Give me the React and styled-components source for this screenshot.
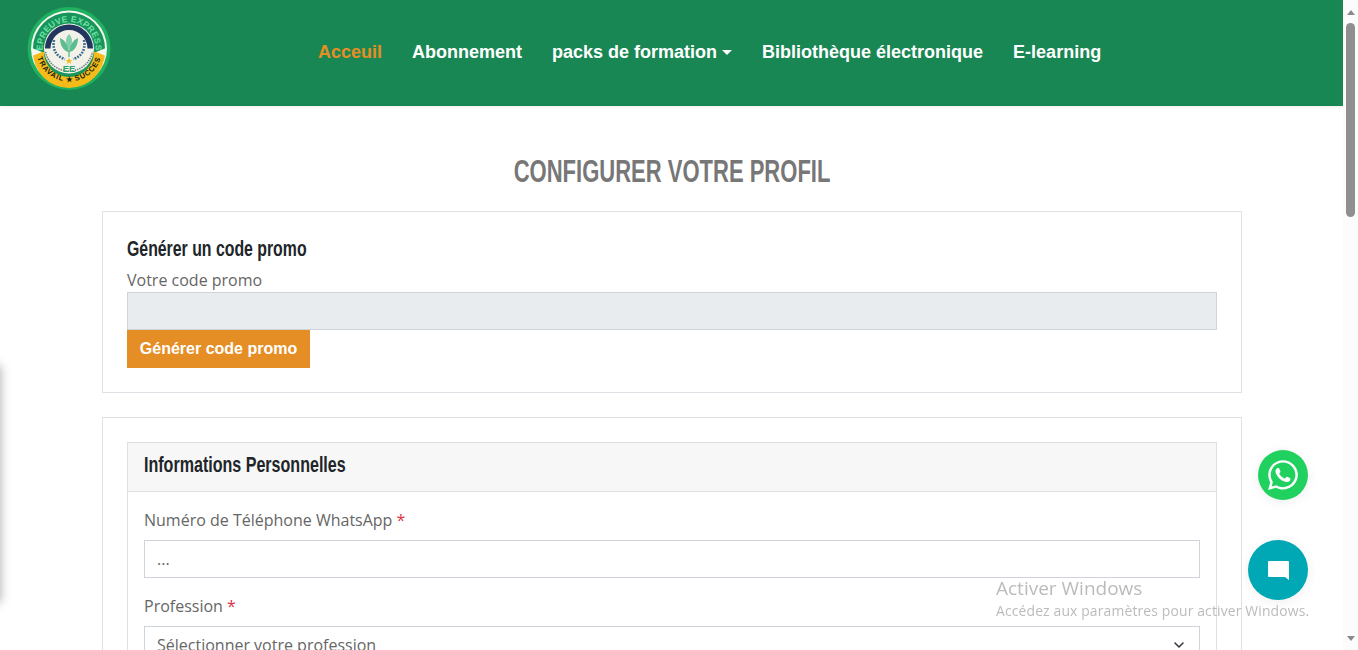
import React from "react";
import styled, { createGlobalStyle } from "styled-components";
import { ChevronDown } from "lucide-react";
import { FaWhatsapp } from "react-icons/fa";

const GlobalStyle = createGlobalStyle`
  html, body {
    margin: 0;
    height: 100%;
    overflow: hidden;
    background: #fff;
  }
  * {
    box-sizing: border-box;
  }
`;

const Shell = styled.div`
  display: flex;
  height: 100vh;
  font-family: "Open Sans", sans-serif;
  color: #666;
`;

const Page = styled.div`
  flex: 1;
  min-width: 0;
  overflow: hidden;
`;

const Header = styled.header`
  height: 106px;
  background: #198754;
  display: flex;
  align-items: flex-start;
  padding: 7px 0 0 27px;
  box-shadow: 0 1px 3px rgba(0, 0, 0, 0.08);
`;

const Nav = styled.nav`
  display: flex;
  gap: 30px;
  margin: 33px 0 0 207px;
  font-family: "Liberation Sans", Arial, sans-serif;
  font-size: 18px;
  font-weight: 700;
  line-height: 24px;
`;

const NavLink = styled.a`
  color: ${(p) => (p.$active ? "#e68e26" : "#fff")};
  display: flex;
  align-items: center;
  white-space: nowrap;
`;

const Caret = styled.span`
  width: 0;
  height: 0;
  margin-left: 5px;
  border-top: 5px solid #fff;
  border-left: 5px solid transparent;
  border-right: 5px solid transparent;
`;

const Content = styled.main`
  padding: 0 101px 0 102px;
`;

const Title = styled.h1`
  margin: 47px 0 20px;
  font-family: "Liberation Sans", sans-serif;
  font-size: 31px;
  line-height: 38px;
  font-weight: 700;
  color: #777;
  text-align: center;
  text-transform: uppercase;
`;

/* no Oswald here: squeeze a bold sans to the same width */
const TitleText = styled.span`
  display: inline-block;
  transform: scaleX(0.71);
  transform-origin: center;
`;

const Card = styled.section`
  border: 1px solid #dee2e6;
  padding: 24px;
  margin-bottom: 24px;
`;

const CardTitle = styled.h2`
  margin: 0 0 ${(p) => p.$gap || 0}px;
  font-family: "Liberation Sans", sans-serif;
  font-size: 22px;
  line-height: 26px;
  font-weight: 700;
  color: #212529;
  white-space: nowrap;
  transform: scaleX(${(p) => p.$squeeze});
  transform-origin: left center;
`;

const Label = styled.label`
  display: block;
  font-size: 16px;
  line-height: 24px;
  color: #666;
`;

const Required = styled.span`
  color: #dc3545;
`;

const ReadOnlyInput = styled.div`
  height: 38px;
  background: #e9ecef;
  border: 1px solid #ced4da;
`;

const OrangeButton = styled.button`
  display: block;
  width: 183px;
  height: 38px;
  padding: 0;
  border: 0;
  background: #e68e26;
  color: #fff;
  font-family: "Liberation Sans", Arial, sans-serif;
  font-size: 16px;
  font-weight: 700;
`;

const Panel = styled.div`
  border: 1px solid #dfdfdf;
`;

const PanelHead = styled.div`
  height: 49px;
  padding: 0 16px 5px;
  display: flex;
  align-items: center;
  background: #f7f7f7;
  border-bottom: 1px solid #dfdfdf;
`;

const PanelBody = styled.div`
  padding: 16px;
`;

const Field = styled.div`
  margin-bottom: 16px;
`;

const FieldLabel = styled(Label)`
  margin-bottom: 8px;
`;

const TextField = styled.div`
  height: 38px;
  padding: 0 12px;
  display: flex;
  align-items: center;
  justify-content: space-between;
  border: 1px solid #ced4da;
  color: #666;
  font-size: 16px;
  line-height: 24px;
`;

const Scrollbar = styled.aside`
  width: 15px;
  flex: none;
  background: #fcfcfc;
  display: flex;
  flex-direction: column;
  align-items: center;
`;

const Arrow = styled.span`
  width: 0;
  height: 0;
  border-left: 4.5px solid transparent;
  border-right: 4.5px solid transparent;
  ${(p) => (p.$down ? "border-top: 5px solid #8a8a8a;" : "border-bottom: 5px solid #8a8a8a;")}
  ${(p) => (p.$down ? "margin-top: auto; margin-bottom: 9px;" : "margin-top: 10px;")}
`;

const Thumb = styled.div`
  width: 9px;
  height: 194px;
  margin-top: 8px;
  border-radius: 5px;
  background: #8f8f8f;
`;

const Floating = styled.a`
  position: fixed;
  border-radius: 50%;
  display: flex;
  align-items: center;
  justify-content: center;
  color: #fff;
  background: ${(p) => p.$bg};
  width: ${(p) => p.$size}px;
  height: ${(p) => p.$size}px;
  left: ${(p) => p.$left}px;
  top: ${(p) => p.$top}px;
  box-shadow: 0 2px 12px rgba(0, 0, 0, 0.07);
`;

const Watermark = styled.div`
  position: fixed;
  left: 996px;
  top: 576px;
  color: rgba(120, 120, 120, 0.5);
  font-family: "Open Sans", sans-serif;
  pointer-events: none;
`;

const WatermarkTitle = styled.div`
  font-size: 19px;
  line-height: 24px;
`;

const WatermarkText = styled.div`
  font-size: 13.9px;
  line-height: 21px;
  letter-spacing: 0.15px;
  white-space: nowrap;
`;

const SideShadow = styled.div`
  position: fixed;
  left: -300px;
  top: 366px;
  width: 300px;
  height: 236px;
  box-shadow: 0 0 10px rgba(0, 0, 0, 0.35);
`;

const Logo = () => (
  <svg width="84" height="84" viewBox="0 0 84 84" style={{ display: "block" }}>
    <defs>
      <path id="logoTop" d="M25 61.8 A26.5 26.5 0 1 1 59 61.8" />
      <path id="logoBottom" d="M11 30.2 A33 33 0 1 0 73 30.2" />
    </defs>
    <circle cx="42" cy="41.5" r="41.5" fill="#1fb060" />
    <circle cx="42" cy="41.5" r="38" fill="#f4f7ef" />
    <circle cx="42" cy="41.5" r="36" fill="#18955a" />
    <path d="M6 45 H17 A25 25 0 0 0 67 45 H78 A36 36 0 0 1 6 45 Z" fill="#f5bb18" />
    <path d="M5 41 L15 45 L5 49 Z M79 41 L69 45 L79 49 Z" fill="#f4f7ef" />
    <circle cx="42" cy="41.5" r="25" fill="#f3f2e8" />
    <path d="M18 41.5 A24 24 0 0 1 66 41.5 H60.5 A18.5 18.5 0 0 0 23.5 41.5 Z" fill="#22375f" />
    <path d="M18.5 45 A24 24 0 0 0 65.5 45" fill="none" stroke="#6f7a80" strokeWidth="1.6" strokeDasharray="1.4 1" />
    <text fontFamily="Liberation Sans" fontSize="8.6" fontWeight="700" fill="#6fe0a6" letterSpacing="0.2">
      <textPath href="#logoTop" startOffset="50%" textAnchor="middle">EPREUVE EXPRESS</textPath>
    </text>
    <text fontFamily="Liberation Sans" fontSize="7.4" fontWeight="700" fill="#141a14" letterSpacing="0.8">
      <textPath href="#logoBottom" startOffset="50%" textAnchor="middle">TRAVAIL ★ SUCCES</textPath>
    </text>
    <path d="M42 27 C46 31 46 37 42 43 C38 37 38 31 42 27 Z" fill="#7fd0aa" />
    <path d="M33 31 C38 33 41 38 42 45 C36 44 33 38 33 31 Z M51 31 C46 33 43 38 42 45 C48 44 51 38 51 31 Z" fill="#5fbb92" />
    <path d="M42 43 V50" stroke="#5fbb92" strokeWidth="1.4" />
    <path d="M27 33 C25 43 30 50 38 52 M57 33 C59 43 54 50 46 52" fill="none" stroke="#3a6a8f" strokeWidth="2.6" strokeDasharray="1.8 1.2" />
    <path d="M42 50.6 L43 53 L45.4 53 L43.5 54.6 L44.2 57 L42 55.6 L39.8 57 L40.5 54.6 L38.6 53 L41 53 Z" fill="#f5bb18" />
    <text x="42" y="64.5" fontFamily="Liberation Sans" fontSize="9.5" fontWeight="700" fill="#2aa568" textAnchor="middle">EE</text>
  </svg>
);

const ChatBubble = () => (
  <svg width="21" height="19" viewBox="0 0 21 19" fill="#fff">
    <path d="M1 0H20a1 1 0 0 1 1 1V19L17 16H1a1 1 0 0 1-1-1V1a1 1 0 0 1 1-1Z" />
  </svg>
);

const App = () => {
  return (
    <Shell>
      <GlobalStyle />
      <Page>
        <Header>
          <Logo />
          <Nav>
            <NavLink $active>Acceuil</NavLink>
            <NavLink>Abonnement</NavLink>
            <NavLink>
              packs de formation
              <Caret />
            </NavLink>
            <NavLink>Bibliothèque électronique</NavLink>
            <NavLink>E-learning</NavLink>
          </Nav>
        </Header>
        <Content>
          <Title>
            <TitleText>Configurer votre profil</TitleText>
          </Title>
          <Card>
            <CardTitle $squeeze={0.72} $gap={6}>Générer un code promo</CardTitle>
            <Label>Votre code promo</Label>
            <ReadOnlyInput />
            <OrangeButton>Générer code promo</OrangeButton>
          </Card>
          <Card>
            <Panel>
              <PanelHead>
                <CardTitle $squeeze={0.73}>Informations Personnelles</CardTitle>
              </PanelHead>
              <PanelBody>
                <Field>
                  <FieldLabel>
                    Numéro de Téléphone WhatsApp <Required>*</Required>
                  </FieldLabel>
                  <TextField>...</TextField>
                </Field>
                <Field>
                  <FieldLabel>
                    Profession <Required>*</Required>
                  </FieldLabel>
                  <TextField>
                    Sélectionner votre profession
                    <ChevronDown size={16} color="#343a40" strokeWidth={2.4} />
                  </TextField>
                </Field>
              </PanelBody>
            </Panel>
          </Card>
        </Content>
      </Page>
      <Scrollbar>
        <Arrow />
        <Thumb />
        <Arrow $down />
      </Scrollbar>
      <SideShadow />
      <Floating $bg="#20d160" $size={50} $left={1258} $top={450}>
        <FaWhatsapp size={34} />
      </Floating>
      <Floating $bg="#00a8b5" $size={60} $left={1248} $top={540}>
        <ChatBubble />
      </Floating>
      <Watermark>
        <WatermarkTitle>Activer Windows</WatermarkTitle>
        <WatermarkText>Accédez aux paramètres pour activer Windows.</WatermarkText>
      </Watermark>
    </Shell>
  );
};

export default App;
